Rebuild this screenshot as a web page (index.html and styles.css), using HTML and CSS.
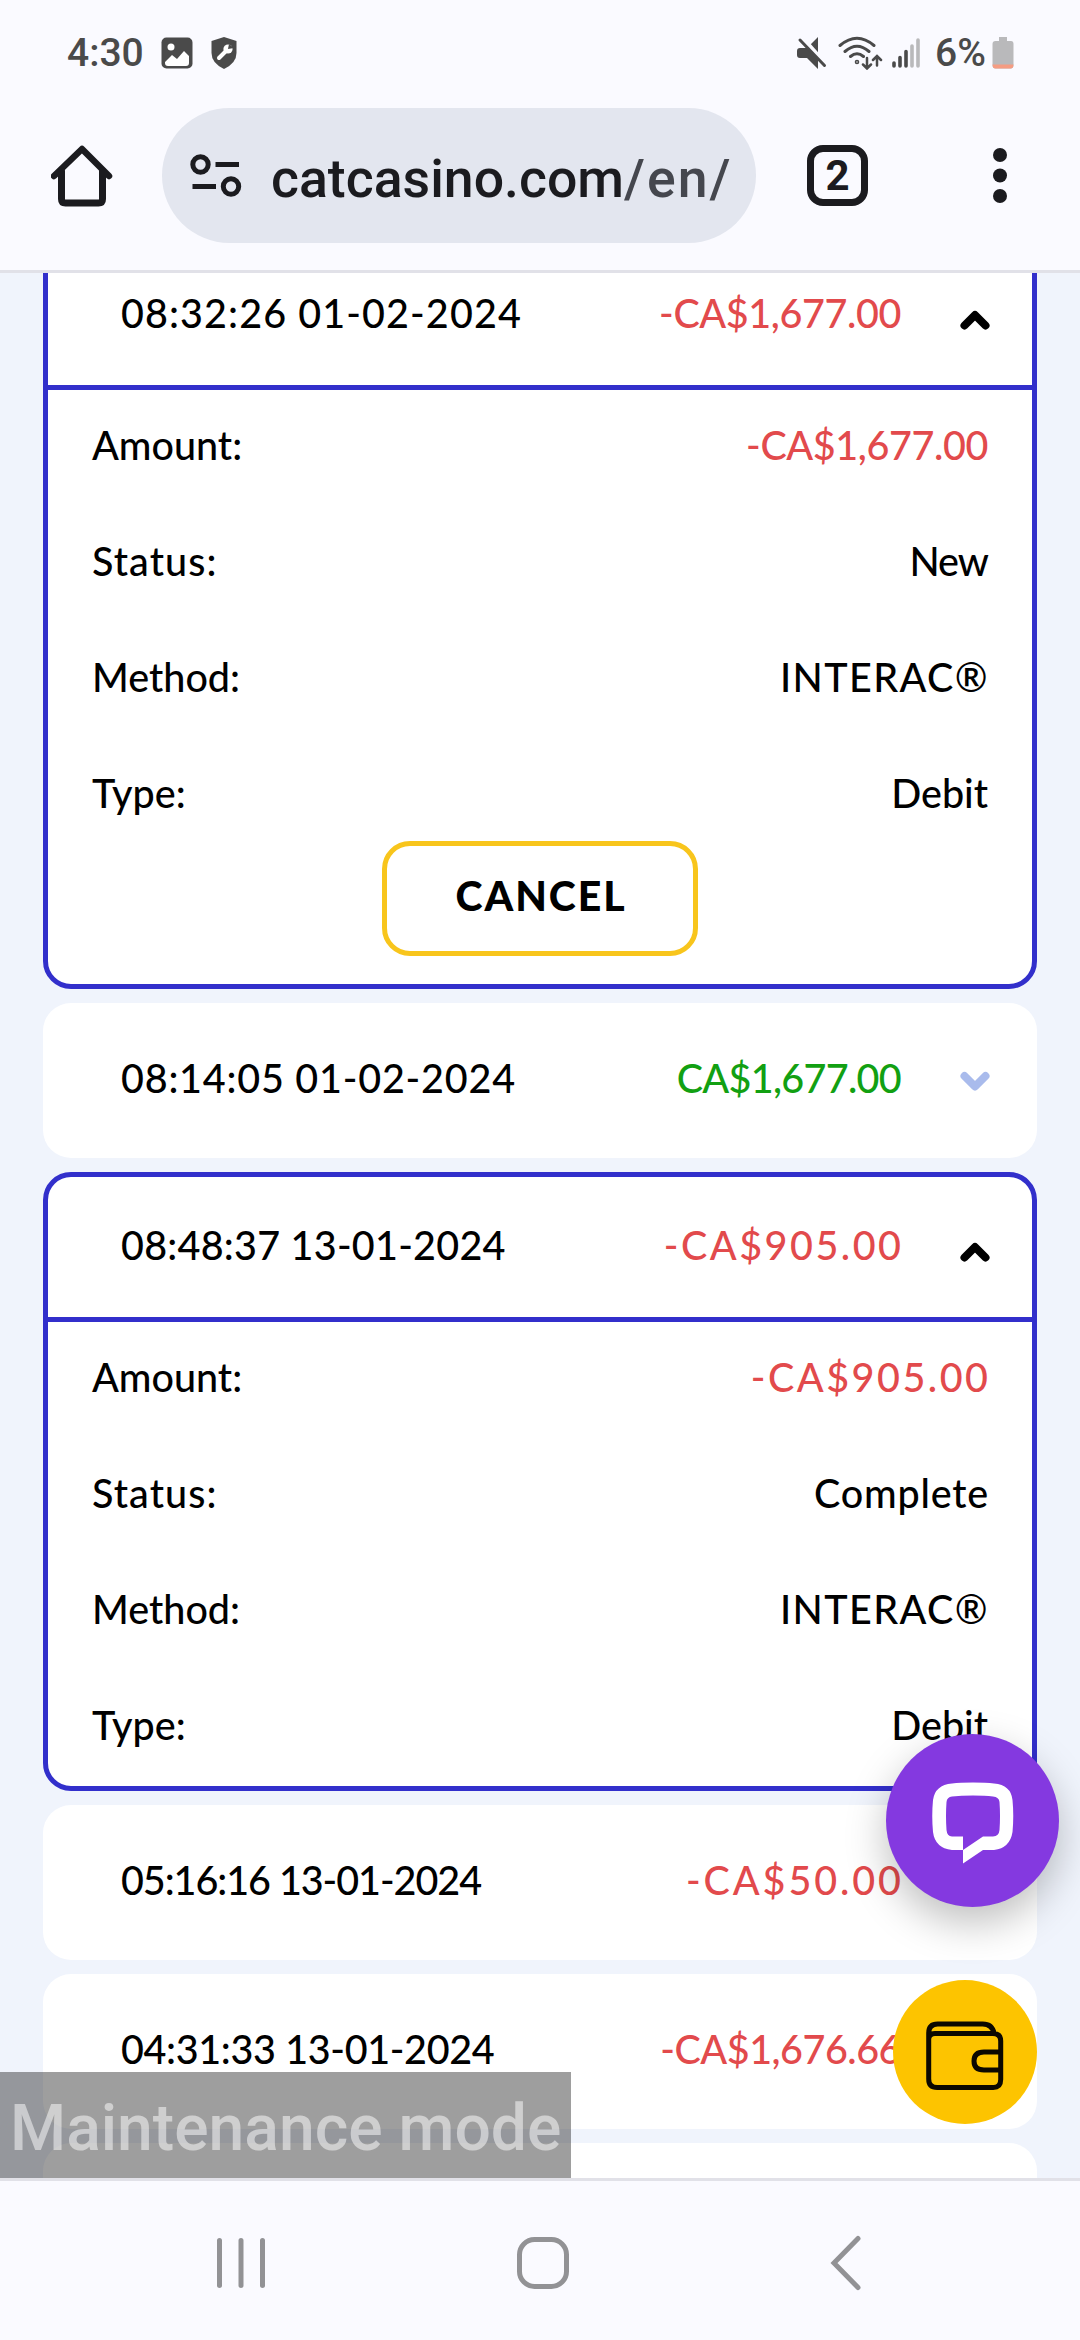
FILE: index.html
```html
<!DOCTYPE html>
<html lang="en">
<head>
    <meta charset="UTF-8">
    <title>Transactions</title>
    <link rel="stylesheet" href="styles.css">
</head>
<body>
    <!-- Phone status bar -->
    <div class="status-bar">
        <span class="clock">4:30</span>
        <svg class="icon-image" width="32" height="32" viewBox="0 0 32 32">
            <rect x="0.5" y="0.5" width="31" height="31" rx="5" fill="#4a4a4a"/>
            <circle cx="10" cy="10" r="3.5" fill="#fff"/>
            <path d="M4 25l7-7 5 4 7-8 5 5v7q0 3-3 3H7q-3 0-3-3z" fill="#fff"/>
        </svg>
        <svg class="icon-shield" width="26" height="32" viewBox="0 0 26 32">
            <path d="M13 0L25.500 4V16Q25.500 26 13 32Q.5 26 .5 16V4z" fill="#4a4a4a"/>
            <path d="M8 21l9-9" stroke="#fff" stroke-width="4" stroke-linecap="round"/>
            <circle cx="17" cy="12" r="4.600" fill="#fff"/>
            <path d="M17 12l1-5 5 4z" fill="#4a4a4a"/>
        </svg>
        <span class="spacer"></span>
        <svg width="30" height="32" viewBox="0 0 30 32">
            <path d="M0 14q0-3 3-3h7L21 0v32L10 21H3q-3 0-3-3z" fill="#4a4a4a"/>
            <path d="M5 1l25 28" stroke="#fafaff" stroke-width="5"/>
            <path d="M3 3l24.500 25.500" stroke="#4a4a4a" stroke-width="3" stroke-linecap="round"/>
        </svg>
        <svg class="icon-wifi" width="45" height="34" viewBox="0 0 45 34" fill="none" stroke="#4a4a4a" stroke-width="3" stroke-linecap="round">
            <path d="M2 9.500Q19-5 36 9.500M7 15.500Q19 5 31 15.500M12.500 20.500Q19 15 25.500 20.500"/>
            <circle cx="19" cy="26" r="0.800"/>
            <path d="M29 22v10M25 28.500l4 4 4-4M39 29.500v-9M35 24l4-4 4 4" stroke-width="2.500"/>
        </svg>
        <svg class="icon-signal" width="28" height="32" viewBox="0 0 28 32" stroke="#4a4a4a" stroke-width="3.600" stroke-linecap="round">
            <path d="M2 26v3M8 20.500V29M14 14.500V29"/>
            <path d="M20 9V29M26 3V29" stroke="#b9b9bb"/>
        </svg>
        <span class="battery-text">6%</span>
        <svg class="icon-battery" width="22" height="32" viewBox="0 0 22 32">
            <path d="M7 0h8v4h4q2.500 0 2.500 3v21q0 3.500-3 3.500h-15q-3 0-3-3.500V7q0-3 3-3H7z" fill="#b9b9bb"/>
            <path d="M.5 27.500h21q0 4-3 4h-15q-3 0-3-4z" fill="#f59c82"/>
        </svg>
    </div>

    <!-- Browser toolbar -->
    <div class="toolbar">
        <svg class="icon-home" width="62" height="62" viewBox="0 0 62 62" fill="none" stroke="#1b1b1f" stroke-width="7" stroke-linecap="round" stroke-linejoin="round">
            <path d="M3 31L31 4 58 31" stroke-width="6.500"/>
            <path d="M10.500 26v28q0 4 4 4h33q4 0 4-4V26"/>
        </svg>
        <div class="url-bar">
            <svg width="52" height="44" viewBox="0 0 52 44" fill="none" stroke="#1b1b1f" stroke-width="5">
                <circle cx="10.500" cy="10.500" r="7.700"/>
                <circle cx="41" cy="32.500" r="7.700"/>
                <path d="M25.500 10.500H49M2.500 32.500H26"/>
            </svg>
            <div class="url">catcasino.com<span>/en/</span></div>
        </div>
        <div class="tab-count">2</div>
        <svg class="icon-dots" width="16" height="58" viewBox="0 0 16 58" fill="#1b1b1f">
            <circle cx="8" cy="8" r="7"/>
            <circle cx="8" cy="28.500" r="7"/>
            <circle cx="8" cy="49" r="7"/>
        </svg>
    </div>

    <!-- Transaction history -->
    <div class="page">
        <div class="list">
            <div class="card open">
                <div class="card-header">
                    <span class="date d1">08:32:26 01-02-2024</span>
                    <span class="amount minus a1">-CA$1,677.00</span>
                    <svg class="arrow" width="30" height="20" viewBox="0 0 30 20"><path d="M4.500 15.500L15 5l10.500 10.500"/></svg>
                </div>
                <div class="details">
                    <div class="row"><span>Amount:</span><span class="minus a1">-CA$1,677.00</span></div>
                    <div class="row"><span class="status">Status:</span><span class="new">New</span></div>
                    <div class="row"><span>Method:</span><span class="method">INTERAC®</span></div>
                    <div class="row"><span>Type:</span><span>Debit</span></div>
                </div>
                <button class="cancel-btn">CANCEL</button>
            </div>
            <div class="card">
                <div class="card-header">
                    <span class="date d2">08:14:05 01-02-2024</span>
                    <span class="amount plus a2">CA$1,677.00</span>
                    <svg class="arrow" width="30" height="20" viewBox="0 0 30 20"><path d="M4.500 5L15 15.500 25.500 5"/></svg>
                </div>
            </div>
            <div class="card open">
                <div class="card-header">
                    <span class="date d3">08:48:37 13-01-2024</span>
                    <span class="amount minus a3">-CA$905.00</span>
                    <svg class="arrow" width="30" height="20" viewBox="0 0 30 20"><path d="M4.500 15.500L15 5l10.500 10.500"/></svg>
                </div>
                <div class="details">
                    <div class="row"><span>Amount:</span><span class="minus a3">-CA$905.00</span></div>
                    <div class="row"><span class="status">Status:</span><span class="complete">Complete</span></div>
                    <div class="row"><span>Method:</span><span class="method">INTERAC®</span></div>
                    <div class="row"><span>Type:</span><span>Debit</span></div>
                </div>
            </div>
            <div class="card">
                <div class="card-header">
                    <span class="date d4">05:16:16 13-01-2024</span>
                    <span class="amount minus a4">-CA$50.00</span>
                    <svg class="arrow" width="30" height="20" viewBox="0 0 30 20"><path d="M4.500 5L15 15.500 25.500 5"/></svg>
                </div>
            </div>
            <div class="card">
                <div class="card-header">
                    <span class="date d5">04:31:33 13-01-2024</span>
                    <span class="amount minus a5">-CA$1,676.66</span>
                    <svg class="arrow" width="30" height="20" viewBox="0 0 30 20"><path d="M4.500 5L15 15.500 25.500 5"/></svg>
                </div>
            </div>
            <div class="card"></div>
        </div>

        <!-- Floating buttons -->
        <div class="chat-btn">
            <svg width="82" height="82" viewBox="0 0 82 82">
                <path fill-rule="evenodd" fill="#fff" d="M41 .5Q54 .5 62 1.500Q79 3 80.500 18Q82 34 80.500 50Q78 66 62 68H51L31 81.500V68H20Q3 66 1 50Q-.5 34 1 18Q3 3 20 1.500Q28 .5 41 .5zM41 13.500Q29 13.500 20 14.500Q15 15 14.500 20Q13.500 34 14.500 48Q15 54 20 54.500H31V68L51 54.500H61Q67 54 67.500 48Q68.500 34 67.500 20Q67 15 61 14.500Q53 13.500 41 13.500z"/>
            </svg>
        </div>
        <div class="wallet-btn">
            <svg width="78" height="70" viewBox="0 0 78 70" fill="none" stroke="#0c0800" stroke-width="5">
                <path d="M2.700 14v44q0 8.500 8.500 8.500h56q7.500 0 7.500-8V20q0-7.500-8-7.500H9q-6.300 0-6.300 6V12q0-9 9-9h45q9.500 0 11.500 9.500"/>
                <path d="M75 31H58q-10 0-10 9t10 9h17"/>
            </svg>
        </div>
        <div class="maintenance">Maintenance mode</div>
    </div>

    <!-- Android navigation -->
    <div class="nav-bar">
        <svg width="50" height="56" viewBox="0 0 50 56" stroke="#929295" stroke-width="5" stroke-linecap="round"><path d="M3.500 5.500v45M25 5.500v45M46.500 5.500v45"/></svg>
        <svg class="nav-home" width="52" height="56" viewBox="0 0 52 56" fill="none" stroke="#929295" stroke-width="5"><rect x="2.500" y="4.500" width="47" height="47" rx="15"/></svg>
        <svg class="nav-back" width="32" height="56" viewBox="0 0 32 56" fill="none" stroke="#929295" stroke-width="5" stroke-linecap="round"><path d="M28 3.500L4 28l24 24.500"/></svg>
    </div>
</body>
</html>
```
FILE: styles.css
```css
* {
    box-sizing: border-box;
}
body {
    margin: 0;
    width: 1080px;
    height: 2340px;
    display: flex;
    flex-direction: column;
    overflow: hidden;
    background: #fafaff;
    font-family: Lato, "Liberation Sans", sans-serif;
}
svg {
    display: block;
    flex-shrink: 0;
}
.status-bar {
    height: 108px;
    padding: 0 66px 2px 67px;
    display: flex;
    align-items: center;
    font: 500 39px Roboto, sans-serif;
    color: #4a4a4a;
}
.icon-image {
    margin-left: 17px;
}
.icon-shield {
    margin-left: 18px;
}
.spacer {
    flex: 1;
}
.icon-wifi {
    margin-left: 11px;
}
.icon-signal {
    margin-left: 9px;
}
.battery-text {
    margin-left: 15px;
}
.icon-battery {
    margin-left: 6px;
}
.toolbar {
    height: 165px;
    padding: 0 72px 27px 51px;
    display: flex;
    align-items: center;
    border-bottom: 3px solid #e1e1e8;
}
.url-bar {
    width: 594px;
    height: 135px;
    margin-left: 49px;
    padding-left: 28px;
    display: flex;
    align-items: center;
    border-radius: 68px;
    background: #e3e6ef;
}
.url {
    width: 459px;
    margin-left: 29px;
    padding-top: 6px;
    overflow: hidden;
    white-space: nowrap;
    font: 500 53.600px Roboto, sans-serif;
    color: #1b1b1f;
}
.url span {
    color: #45474e;
    letter-spacing: 2px;
}
.tab-count {
    width: 61px;
    height: 61px;
    margin-left: 51px;
    border: 7px solid #1b1b1f;
    border-radius: 16px;
    text-align: center;
    font: 700 42px/47px Roboto, sans-serif;
    color: #1b1b1f;
}
.icon-dots {
    margin-left: auto;
}
.page {
    position: relative;
    height: 1905px;
    overflow: hidden;
    background: #f0f4fc;
}
.list {
    margin-top: -33px;
    padding: 0 43px;
    display: flex;
    flex-direction: column;
    gap: 14px;
}
.card {
    height: 155px;
    border-radius: 28px;
    background: #fff;
    font-size: 39.500px;
    font-weight: 500;
    color: #000;
}
.card.open {
    height: auto;
    padding-bottom: 36px;
    border: 5px solid #322fcb;
}
.card-header {
    height: 155px;
    padding: 0 47px 6px 78px;
    display: flex;
    align-items: center;
}
.open .card-header {
    height: 145px;
    padding: 0 42px 5px 73px;
    border-bottom: 5px solid #322fcb;
}
.date {
    flex: 1;
    white-space: nowrap;
}
.amount {
    width: 300px;
    text-align: right;
}
.minus {
    color: #e24a4c;
}
.plus {
    color: #12a012;
}

/* letter spacing for each text */
.d1 { letter-spacing: 1.100px; }
.d2 { letter-spacing: 0.780px; }
.d3 { letter-spacing: 0.250px; }
.d4 { letter-spacing: -1.050px; }
.d5 { letter-spacing: -0.350px; }
.a1 { letter-spacing: -0.400px; }
.a2 { letter-spacing: -0.700px; }
.a3 { letter-spacing: 2.500px; margin-right: -2.500px; }
.a4 { letter-spacing: 2.900px; margin-right: -2.900px; }
.a5 { letter-spacing: -0.500px; }
.a3 + .arrow { margin-left: 61.500px; }
.a4 + .arrow { margin-left: 61.900px; }
.status { letter-spacing: 1.100px; }
.new { letter-spacing: -1px; }
.complete { letter-spacing: 0.800px; margin-right: -1px; }
.method { letter-spacing: 1.400px; margin-right: -1px; }

.card-header .arrow {
    margin: 6px 0 0 59px;
    fill: none;
    stroke: #a9bbec;
    stroke-width: 8;
    stroke-linecap: round;
    stroke-linejoin: round;
}
.open .card-header .arrow {
    margin-top: 15px;
    stroke: #000;
}
.details {
    padding: 30px 44px 0;
    display: flex;
    flex-direction: column;
    gap: 66px;
}
.row {
    height: 50px;
    display: flex;
    justify-content: space-between;
    line-height: 50px;
}
.cancel-btn {
    display: block;
    width: 316px;
    height: 115px;
    margin: 23px auto -8px;
    padding: 0 0 7px 2px;
    border: 5px solid #f8c51c;
    border-radius: 28px;
    background: #fff;
    font: 900 41px Lato, sans-serif;
    letter-spacing: 1.900px;
    color: #000;
}
.chat-btn,
.wallet-btn {
    position: absolute;
    display: flex;
    align-items: center;
    justify-content: center;
    border-radius: 50%;
}
.chat-btn {
    right: 21px;
    top: 1461px;
    width: 173px;
    height: 173px;
    padding-top: 4px;
    background: #8439e0;
    box-shadow: 0 16px 40px rgba(0, 0, 0, 0.25);
}
.wallet-btn {
    right: 43px;
    top: 1707px;
    width: 144px;
    height: 144px;
    padding-top: 8px;
    background: #fdc400;
}
.maintenance {
    position: absolute;
    left: 0;
    bottom: 0;
    width: 571px;
    height: 106px;
    padding-left: 10px;
    background: rgba(0, 0, 0, 0.38);
    font: 500 64.200px/113px Roboto, sans-serif;
    color: rgba(255, 255, 255, 0.5);
    white-space: nowrap;
}
.nav-bar {
    flex: 1;
    padding: 5px 0 0 216px;
    display: flex;
    align-items: center;
    border-top: 3px solid #e1e1e8;
}
.nav-home {
    margin-left: 251px;
}
.nav-back {
    margin-left: 261px;
}
```
